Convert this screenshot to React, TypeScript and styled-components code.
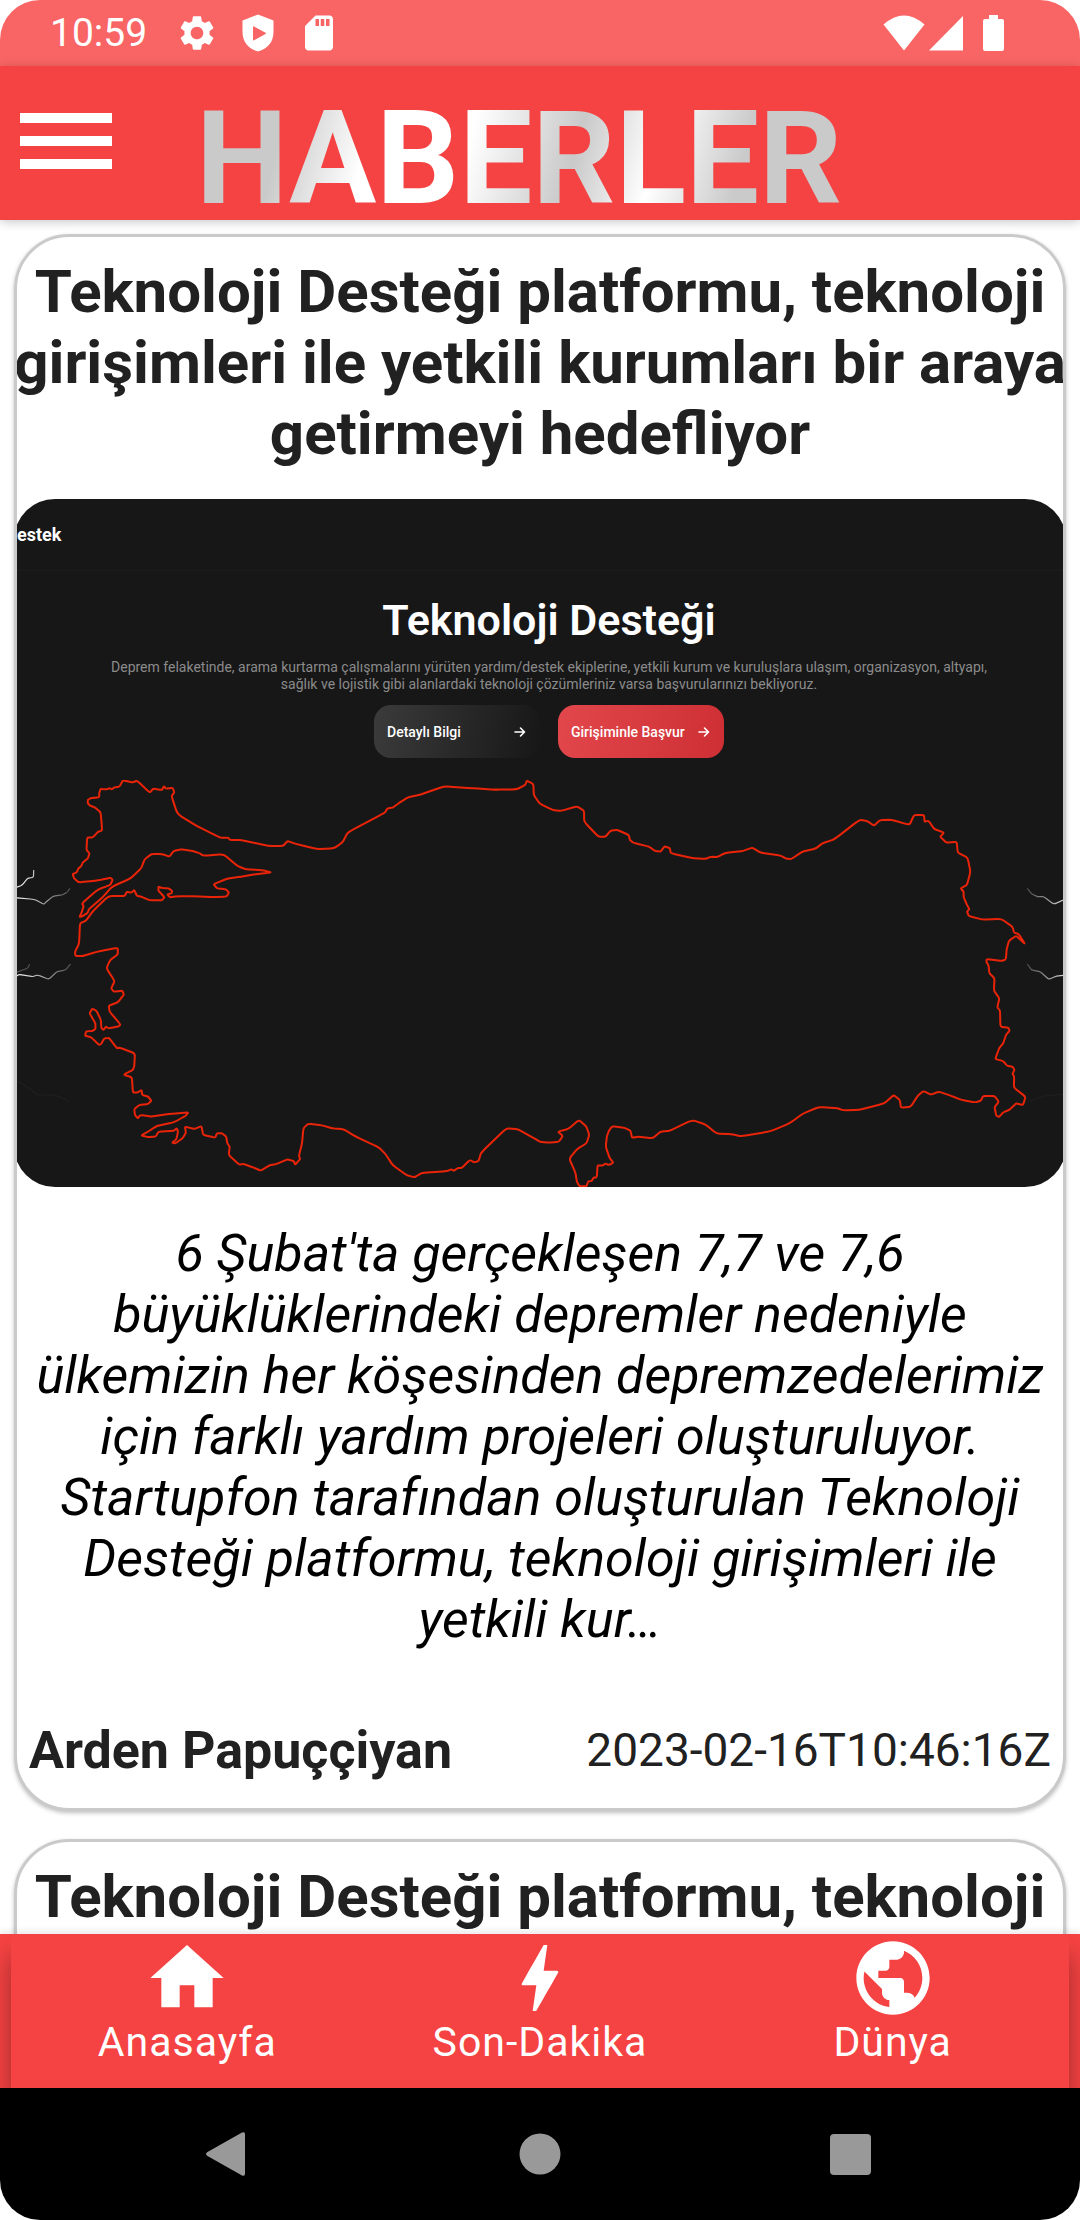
import React from "react";
import styled, { createGlobalStyle } from "styled-components";
import { MdBolt, MdHome, MdPublic, MdSdCard, MdSettings } from "react-icons/md";
import type { IconType } from "react-icons";

const RED = "#f54242";
const INK = "#212121";

const GlobalStyle = createGlobalStyle`
  *, *::before, *::after { box-sizing: border-box; }
  html, body, #root { height: 100%; }
  body {
    margin: 0;
    background: #fff;
    font-family: Roboto, "Noto Sans", sans-serif;
    color: ${INK};
  }
  h1, h2, p { margin: 0; }
  button { border: 0; padding: 0; background: none; font: inherit; color: inherit; cursor: pointer; }
  svg { display: block; }
`;

const Screen = styled.div`
  display: flex;
  flex-direction: column;
  height: 100vh;
  overflow: hidden;
  border-radius: 40px;
  background: #fff;
`;

/* ---------- status bar ---------- */

const StatusBar = styled.div`
  display: flex;
  flex: none;
  align-items: center;
  justify-content: space-between;
  height: 66px;
  padding: 0 76px 0 50px;
  background: #f96565;
  color: #fff;
`;

const StatusGroup = styled.div<{ $gap: number }>`
  display: flex;
  align-items: center;
  gap: ${(p) => p.$gap}px;
`;

const Clock = styled.span`
  margin-right: 10px;
  font-size: 39px;
  line-height: 46px;
`;

/* ---------- header ---------- */

const Header = styled.header`
  position: relative;
  z-index: 1;
  display: flex;
  flex: none;
  align-items: flex-end;
  gap: 84px;
  height: 154px;
  padding-left: 20px;
  background: ${RED};
  box-shadow: 0 2px 10px rgba(0, 0, 0, 0.22);
`;

const MenuButton = styled.button`
  display: flex;
  flex: none;
  flex-direction: column;
  justify-content: center;
  align-self: flex-start;
  gap: 13px;
  width: 92px;
  height: 150px;
`;

const MenuLine = styled.span`
  height: 10px;
  background: #fff;
`;

const Brand = styled.h1`
  font-size: 130px;
  line-height: 122px;
  font-weight: 700;
  color: transparent;
  background: linear-gradient(
    105deg,
    #cacaca 14%,
    #ffffff 27%,
    #ffffff 42%,
    #c9c9c9 58%,
    #ffffff 70%,
    #cacaca 83%
  );
  background-clip: text;
  -webkit-background-clip: text;
`;

/* ---------- feed ---------- */

const Feed = styled.main`
  display: flex;
  flex: 1;
  flex-direction: column;
  gap: 28px;
  min-height: 0;
  padding: 14px 14px 0;
  overflow-y: auto;
  scrollbar-width: none;
`;

const Card = styled.article`
  flex: none;
  overflow: hidden;
  border: 3px solid #cacaca;
  border-radius: 55px;
  background: #fff;
  box-shadow: 0 2px 4px rgba(0, 0, 0, 0.25);
`;

const Headline = styled.h2`
  margin: 0 -8px;
  padding-top: 19px;
  font-size: 60px;
  line-height: 71px;
  font-weight: 700;
  text-align: center;
`;

const Summary = styled.p`
  padding: 36px 14px 0;
  font-size: 52px;
  line-height: 61px;
  font-style: italic;
  color: #000;
  text-align: center;
`;

const Byline = styled.footer`
  display: flex;
  align-items: center;
  justify-content: space-between;
  padding: 70px 12px 27px;
`;

const Author = styled.span`
  font-size: 52px;
  line-height: 61px;
  font-weight: 700;
`;

const PublishedAt = styled.time`
  font-size: 46px;
  line-height: 61px;
`;

/* ---------- article picture ---------- */

const Picture = styled.div`
  margin: 30px -3px 0;
  overflow: hidden;
  border-radius: 41px;
  background: #171717;
  color: #fff;
`;

const PictureBar = styled.div`
  display: flex;
  align-items: center;
  height: 72px;
  padding-left: 3px;
  border-bottom: 1px solid #1c1c1c;
  font-size: 18px;
  font-weight: 700;
`;

const Hero = styled.div`
  display: flex;
  flex-direction: column;
  align-items: center;
  padding: 24px 0 22px 18px;
  text-align: center;
`;

const HeroTitle = styled.p`
  font-size: 43px;
  line-height: 50px;
  font-weight: 600;
`;

const HeroText = styled.p`
  margin-top: 14px;
  font-size: 14px;
  line-height: 17px;
  color: #8b8b8b;
`;

const HeroActions = styled.div`
  display: flex;
  gap: 18px;
  margin-top: 12px;
`;

const HeroButton = styled.button<{ $primary?: boolean }>`
  display: flex;
  align-items: center;
  justify-content: space-between;
  width: 166px;
  height: 53px;
  padding: 0 14px 0 13px;
  border-radius: 17px;
  background: ${(p) =>
    p.$primary
      ? "linear-gradient(100deg, #e2474b, #cd2f34)"
      : "linear-gradient(100deg, #3b3b3b, #171717)"};
  font-size: 14px;
  font-weight: 500;
`;

const MapDrawing = styled.svg`
  width: 100%;
  height: auto;
`;

/* ---------- bottom bars ---------- */

const TabBar = styled.div`
  position: relative;
  z-index: 1;
  flex: none;
  padding: 0 11px;
  background: ${RED};
  box-shadow: 0 -2px 8px rgba(0, 0, 0, 0.1);
  clip-path: inset(-12px 0 0 0);
`;

const Tabs = styled.nav`
  display: grid;
  grid-template-columns: repeat(3, 1fr);
  height: 154px;
  background: ${RED};
  box-shadow: 0 22px 22px rgba(0, 0, 0, 0.35);
  clip-path: inset(0 -11px);
`;

const Tab = styled.button`
  display: flex;
  flex-direction: column;
  align-items: center;
  color: #fff;
  font-size: 41px;
  line-height: 40px;
  letter-spacing: 1px;
`;

const SystemNav = styled.div`
  display: grid;
  flex: none;
  grid-template-columns: repeat(3, 1fr);
  height: 132px;
  padding: 0 72px;
  background: #000;
`;

const SystemButton = styled.button`
  display: flex;
  align-items: center;
  justify-content: center;
`;

const leftOutline =
  "1550,105 1549,72 1530,62 1525,75 1500,88 1440,89 1375,85 1290,79 1220,104 1185,112 1160,128 1140,143 1125,145 1118,158 1010,217 995,247 970,265 920,267 860,252 835,243 822,258 780,258 700,240 668,240 663,233 640,233 570,197 515,162 498,108 506,98 502,84 482,86 476,79 470,90 445,86 435,98 398,62 385,67 357,61 347,80 332,82 325,88 318,84 310,88 292,87 288,100 288,112 262,115 255,120 255,130 262,137 275,142 292,157 295,190 296,212 285,215 270,232 253,233 251,270 260,280 255,295 240,308 236,318 228,325 222,338 211,342 215,355 228,367 270,363 300,358 322,353 327,360 320,375 285,388 238,430 243,438 238,455 231,471 240,468 255,458 258,448 300,410 325,380 380,355 410,325 420,298 440,282 470,282 492,290 505,272 530,268 560,273 580,280 590,287 650,283 690,318 715,328 760,330 789,337 740,343 700,350 660,356 620,373 630,385 655,387 665,397 658,410 620,411 570,409 515,409 493,412 486,403 498,400 500,393 490,385 470,384 460,380 460,392 478,412 470,421 435,421 410,410 397,407 390,390 382,398 368,396 362,408 315,408 270,453 250,482 232,490 230,550 218,575 219,588 240,588 280,576 342,563 342,583 320,600 309,625 333,663 323,685 330,695 355,692 360,704 342,727 316,737 318,755 350,793 345,799 315,805 308,800 300,810 294,803 293,780 280,752 268,746 260,760 277,790 277,807 268,813 250,814 247,827 265,832 288,855 295,850 303,835 317,834 340,865 347,863 392,880 390,918 386,930 359,944 383,952 386,998 400,997 411,990 413,1005 430,1010 440,1022 430,1032 405,1035 390,1047 392,1065 400,1075 408,1065 440,1070 490,1062 547,1057 540,1067 505,1087 455,1098 430,1115 410,1126 430,1131 452,1130 460,1115 505,1112 513,1105 517,1115 512,1138 500,1148 510,1150 530,1135 540,1118 537,1100 565,1107 585,1098 590,1125 625,1133 630,1120 645,1120 657,1130 660,1150 667,1160 664,1185 695,1214 708,1212 735,1222 757,1232 783,1216 800,1213 835,1198 853,1203 857,1214 872,1197 868,1188 877,1150 881,1105 895,1091 935,1096 965,1105 997,1107 1030,1128 1100,1162 1120,1183 1140,1215 1180,1245 1203,1252 1225,1239 1300,1233 1310,1228 1318,1232 1330,1224 1340,1224 1365,1200 1377,1207 1390,1203 1397,1178 1470,1105 1505,1108 1568,1145";

const rightOutline =
  "0,1145 25,1148 55,1145 66,1128 52,1115 82,1107 113,1080 135,1100 143,1125 135,1150 108,1167 85,1196 103,1238 107,1265 115,1279 135,1279 140,1264 150,1263 156,1253 165,1252 167,1216 180,1217 190,1211 200,1215 213,1208 202,1194 191,1160 194,1130 200,1112 210,1099 245,1103 263,1112 267,1133 285,1130 327,1135 350,1115 375,1113 442,1080 480,1093 513,1121 555,1122 585,1129 670,1114 725,1090 765,1060 810,1041 865,1045 880,1051 925,1050 1000,1030 1027,1005 1045,1020 1048,1043 1077,1040 1097,1007 1113,993 1135,1004 1158,995 1190,1006 1225,1020 1265,1027 1280,1022 1287,1008 1320,1008 1332,1025 1320,1042 1325,1067 1333,1071 1345,1057 1362,1050 1383,1030 1403,1035 1410,1010 1376,983 1377,950 1372,940 1378,930 1372,920 1357,918 1345,903 1322,897 1333,865 1345,850 1353,825 1364,812 1360,803 1337,800 1336,752 1328,742 1334,715 1318,692 1320,655 1305,640 1303,618 1296,605 1298,597 1340,603 1353,598 1355,568 1362,542 1383,527 1409,553 1390,522 1377,518 1372,500 1340,477 1285,479 1245,468 1240,455 1247,447 1240,435 1230,410 1230,395 1222,385 1240,375 1250,335 1242,293 1213,278 1210,245 1180,248 1162,230 1173,218 1145,207 1128,182 1117,185 1115,165 1086,165 1073,195 1020,179 988,180 970,197 950,183 928,179 855,238 820,250 800,266 762,275 730,297 715,296 700,287 640,278 617,263 585,274 540,278 515,291 497,290 480,297 440,294 380,280 377,264 362,259 350,275 333,273 317,260 270,248 261,240 258,225 225,210 205,212 190,230 170,230 128,185 128,152 107,139 60,153 38,150 0,132";

/* The outline was traced in two halves; each half has its own origin. */
const toPoints = (list: string, originX: number): [number, number][] =>
  list.split(" ").map((pair) => {
    const [x, y] = pair.split(",").map(Number);
    return [originX + x / 2.904, 760 + y / 3];
  });

const smooth = (pts: [number, number][], closed: boolean) => {
  const mid = (a: [number, number], b: [number, number], t: number) =>
    `${(a[0] + (b[0] - a[0]) * t).toFixed(1)} ${(a[1] + (b[1] - a[1]) * t).toFixed(1)}`;
  const n = pts.length;
  let d = `M${mid(pts[0], pts[1], closed ? 0.2 : 0)}`;
  const last = closed ? n : n - 2;
  for (let i = 1; i <= last; i++) {
    const a = pts[(i - 1) % n];
    const b = pts[i % n];
    const c = pts[(i + 1) % n];
    d += `L${mid(a, b, 0.8)}Q${b[0].toFixed(1)} ${b[1].toFixed(1)} ${mid(b, c, 0.2)}`;
  }
  return closed ? `${d}Z` : `${d}L${mid(pts[n - 1], pts[n - 1], 0)}`;
};

const outlinePath = smooth([...toPoints(leftOutline, 0), ...toPoints(rightOutline, 540)], true);

const cracks: { points: string; origin: number; tone: string }[] = [
  { points: "40,385 65,375 80,355 97,352 98,330", origin: 0, tone: "url(#fadeOut)" },
  { points: "40,413 100,418 127,433 135,425 155,408 180,405 195,397 203,385", origin: 0, tone: "url(#fadeOut)" },
  { points: "40,655 55,643 95,650 110,645 142,658 165,635 190,630 205,612", origin: 0, tone: "url(#fadeOut)" },
  { points: "40,640 60,632 80,625 86,613", origin: 0, tone: "#555" },
  { points: "40,958 85,985 110,1005 160,1005 203,1025", origin: 0, tone: "#202020" },
  { points: "1415,385 1428,402 1445,410 1463,410 1492,433 1530,415", origin: 540, tone: "url(#fadeIn)" },
  { points: "1415,612 1428,630 1453,635 1477,658 1500,648 1530,645", origin: 540, tone: "url(#fadeIn)" },
  { points: "1415,1027 1460,1008 1530,1002", origin: 540, tone: "#1e1e1e" },
];

const CountryMap = () => (
  <MapDrawing viewBox="14 780 1052 407" fill="none" aria-hidden="true">
    <defs>
      <linearGradient id="fadeOut" gradientUnits="userSpaceOnUse" x1="14" y1="0" x2="74" y2="0">
        <stop offset="0" stopColor="#fff" />
        <stop offset="1" stopColor="#444" />
      </linearGradient>
      <linearGradient id="fadeIn" gradientUnits="userSpaceOnUse" x1="1025" y1="0" x2="1066" y2="0">
        <stop offset="0" stopColor="#444" />
        <stop offset="1" stopColor="#ddd" />
      </linearGradient>
    </defs>
    {cracks.map((c) => (
      <path key={c.points} d={smooth(toPoints(c.points, c.origin), false)} stroke={c.tone} strokeWidth="1.2" />
    ))}
    <path d={outlinePath} stroke="#ea2408" strokeWidth="2" strokeLinejoin="round" />
  </MapDrawing>
);

const Arrow = () => (
  <svg width="12" height="12" viewBox="0 0 12 12" fill="none" stroke="#fff" strokeWidth="1.6" aria-hidden="true">
    <path d="M1 6h9.5M6.5 2l4 4-4 4" strokeLinecap="round" strokeLinejoin="round" />
  </svg>
);

const ArticlePicture = () => (
  <Picture>
    <PictureBar>estek</PictureBar>
    <Hero>
      <HeroTitle>Teknoloji Desteği</HeroTitle>
      <HeroText>
        Deprem felaketinde, arama kurtarma çalışmalarını yürüten yardım/destek ekiplerine, yetkili kurum ve
        kuruluşlara ulaşım, organizasyon, altyapı,
        <br />
        sağlık ve lojistik gibi alanlardaki teknoloji çözümleriniz varsa başvurularınızı bekliyoruz.
      </HeroText>
      <HeroActions>
        <HeroButton type="button">
          Detaylı Bilgi <Arrow />
        </HeroButton>
        <HeroButton type="button" $primary>
          Girişiminle Başvur <Arrow />
        </HeroButton>
      </HeroActions>
    </Hero>
    <CountryMap />
  </Picture>
);

interface Article {
  id: number;
  title: string;
  summary: string;
  author: string;
  publishedAt: string;
}

const story = {
  title: "Teknoloji Desteği platformu, teknoloji girişimleri ile yetkili kurumları bir araya getirmeyi hedefliyor",
  summary:
    "6 Şubat'ta gerçekleşen 7,7 ve 7,6 büyüklüklerindeki depremler nedeniyle ülkemizin her köşesinden depremzedelerimiz için farklı yardım projeleri oluşturuluyor. Startupfon tarafından oluşturulan Teknoloji Desteği platformu, teknoloji girişimleri ile yetkili kur…",
  author: "Arden Papuççiyan",
  publishedAt: "2023-02-16T10:46:16Z",
};

const articles: Article[] = [
  { id: 1, ...story },
  { id: 2, ...story },
];

const ArticleCard = ({ article }: { article: Article }) => (
  <Card>
    <Headline>{article.title}</Headline>
    <ArticlePicture />
    <Summary>{article.summary}</Summary>
    <Byline>
      <Author>{article.author}</Author>
      <PublishedAt dateTime={article.publishedAt}>{article.publishedAt}</PublishedAt>
    </Byline>
  </Card>
);

const tabs: { label: string; icon: IconType }[] = [
  { label: "Anasayfa", icon: MdHome },
  { label: "Son-Dakika", icon: MdBolt },
  { label: "Dünya", icon: MdPublic },
];

const ShieldIcon = () => (
  <svg width="42" height="42" viewBox="0 0 42 42" aria-hidden="true">
    <path
      fill="#fff"
      fillRule="evenodd"
      d="M21 2.500L36.500 8.500V20C36.500 30 30.500 37 21 39.500C11.500 37 5.500 30 5.500 20V8.500ZM16 15V28Q16 28.800 17 28.200L28.500 22Q29.500 21.300 28.500 20.700L17 14.400Q16 14 16 15Z"
    />
  </svg>
);

const WifiIcon = () => (
  <svg width="42" height="36" viewBox="0 0 42 36" fill="#fff" aria-hidden="true">
    <path d="M0.500 9.500Q21 -8.500 41.500 9.500L21 35.500Z" />
  </svg>
);

const SignalIcon = () => (
  <svg width="34" height="36" viewBox="0 0 34 36" fill="#fff" aria-hidden="true">
    <path d="M34 1V35.500H0Z" />
  </svg>
);

const BatteryIcon = () => (
  <svg width="21" height="36" viewBox="0 0 21 36" fill="#fff" aria-hidden="true">
    <path d="M6 0H15V4H19Q21 4 21 6V34Q21 36 19 36H2Q0 36 0 34V6Q0 4 2 4H6Z" />
  </svg>
);

const BatterySlot = styled.span`
  margin-left: 16px;
`;

export default function App() {
  return (
    <>
      <GlobalStyle />
      <Screen>
        <StatusBar>
          <StatusGroup $gap={19}>
            <Clock>10:59</Clock>
            <MdSettings size={42} />
            <ShieldIcon />
            <MdSdCard size={42} />
          </StatusGroup>
          <StatusGroup $gap={4}>
            <WifiIcon />
            <SignalIcon />
            <BatterySlot>
              <BatteryIcon />
            </BatterySlot>
          </StatusGroup>
        </StatusBar>
        <Header>
          <MenuButton type="button" aria-label="Menü">
            <MenuLine />
            <MenuLine />
            <MenuLine />
          </MenuButton>
          <Brand>HABERLER</Brand>
        </Header>
        <Feed>
          {articles.map((article) => (
            <ArticleCard key={article.id} article={article} />
          ))}
        </Feed>
        <TabBar>
          <Tabs>
            {tabs.map(({ label, icon: Icon }) => (
              <Tab key={label} type="button">
                <Icon size={88} />
                {label}
              </Tab>
            ))}
          </Tabs>
        </TabBar>
        <SystemNav>
          <SystemButton type="button" aria-label="Geri">
            <svg width="48" height="48" viewBox="0 0 48 48" fill="#999" aria-hidden="true">
              <path d="M3.500 22L38 2.500Q41 1.500 41 4V44Q41 46.500 38 45.500L3.500 26Q0.500 24 3.500 22Z" />
            </svg>
          </SystemButton>
          <SystemButton type="button" aria-label="Ana ekran">
            <svg width="48" height="48" viewBox="0 0 48 48" fill="#999" aria-hidden="true">
              <circle cx="24" cy="24" r="20.500" />
            </svg>
          </SystemButton>
          <SystemButton type="button" aria-label="Son uygulamalar">
            <svg width="48" height="48" viewBox="0 0 48 48" fill="#999" aria-hidden="true">
              <rect x="2" y="4" width="41" height="41" rx="4" />
            </svg>
          </SystemButton>
        </SystemNav>
      </Screen>
    </>
  );
}
